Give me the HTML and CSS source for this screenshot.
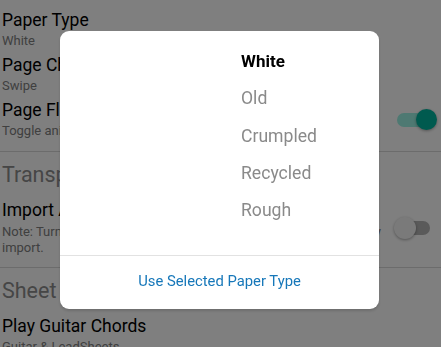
FILE: index.html
```html
<!doctype html>
<html lang="en">
  <head>
    <meta charset="UTF-8" />
    <meta name="viewport" content="width=device-width, initial-scale=1.0" />
    <title>Settings</title>
    <link rel="stylesheet" href="styles.css">
  </head>
  <body>
    <!-- Settings list behind the dialog -->
    <div class="settings">
      <div class="section">
        <div class="row">
          <div class="row-text">
            <div class="row-title">Paper Type</div>
            <div class="row-sub">White</div>
          </div>
        </div>
        <div class="row">
          <div class="row-text">
            <div class="row-title">Page Change Mode</div>
            <div class="row-sub">Swipe</div>
          </div>
        </div>
        <div class="row">
          <div class="row-text">
            <div class="row-title">Page Flip Animation</div>
            <div class="row-sub">Toggle animation when changing pages</div>
          </div>
          <label class="switch on"><span class="track"></span><span class="thumb"></span></label>
        </div>
      </div>

      <hr class="divider" />

      <div class="section">
        <div class="section-title">Transposition</div>
        <div class="row">
          <div class="row-text">
            <div class="row-title">Import Annotations</div>
            <div class="row-sub note">Note: Turning this on will noticeably slow down the speed of every import.</div>
          </div>
          <label class="switch"><span class="track"></span><span class="thumb"></span></label>
        </div>
      </div>

      <hr class="divider" />

      <div class="section">
        <div class="section-title">Sheet Music</div>
        <div class="row">
          <div class="row-text">
            <div class="row-title">Play Guitar Chords</div>
            <div class="row-sub">Guitar &amp; LeadSheets</div>
          </div>
        </div>
      </div>
    </div>

    <!-- Modal -->
    <div class="overlay">
      <div class="dialog">
        <ul class="picker">
          <li class="selected">White</li>
          <li>Old</li>
          <li>Crumpled</li>
          <li>Recycled</li>
          <li>Rough</li>
        </ul>
        <div class="dialog-actions">
          <button class="action">Use Selected Paper Type</button>
        </div>
      </div>
    </div>
  </body>
</html>
```

FILE: styles.css
```css
body {
  margin: 0;
  font-family: Roboto, 'Noto Sans', Arial, sans-serif;
  background: #ffffff;
  color: #000000;
  overflow: hidden;
}

/* Settings list */
.settings {
  padding: 10px 0 0 2px;
}

.row {
  display: flex;
  align-items: center;
  margin-bottom: 5px;
}

.row-text {
  flex: 1;
  min-width: 0;
}

.row-title {
  font-size: 17.5px;
  line-height: 20px;
}

.row-sub {
  font-size: 13px;
  line-height: 19px;
  margin-top: 1px;
  color: #808080;
}

.row-sub.note {
  line-height: 16px;
  margin-top: 4px;
  max-width: 382px;
}

.section-title {
  font-size: 21.5px;
  line-height: 26px;
  color: #8c8c8c;
  margin: 10px 0 12px;
}

.divider {
  border: 0;
  height: 1px;
  background: #d8d8d8;
  margin: 11px 0 0 -2px;
}

/* Switches */
.switch {
  position: relative;
  width: 40px;
  height: 22px;
  margin: 0 7px 0 -28px;
  flex-shrink: 0;
}

.track {
  position: absolute;
  left: 3px;
  top: 4px;
  width: 33px;
  height: 14px;
  border-radius: 7px;
  background: #b4b4b4;
}

.thumb {
  position: absolute;
  left: 0;
  top: 0;
  width: 22px;
  height: 22px;
  border-radius: 50%;
  background: #f5f5f5;
  box-shadow: 0 1px 3px rgba(0, 0, 0, 0.35);
}

.switch.on .track {
  background: #9cf2e4;
}

.switch.on .thumb {
  left: auto;
  right: -3px;
  width: 21px;
  height: 21px;
  background: #00b49e;
}

/* Modal */
.overlay {
  position: fixed;
  inset: 0;
  background: rgba(0, 0, 0, 0.5);
  display: flex;
  justify-content: center;
  align-items: flex-start;
  padding-top: 31px;
}

.dialog {
  width: 319px;
  margin-left: -2px;
  background: #ffffff;
  border-radius: 9px;
  box-shadow: 0 2px 3px rgba(0, 0, 0, 0.15);
  overflow: hidden;
}

.picker {
  list-style: none;
  margin: 0;
  padding: 12px 0 25px 181px;
  border-bottom: 1px solid #e2e2e2;
}

.picker li {
  font-size: 17.6px;
  line-height: 37.33px;
  color: #8a8a8a;
}

.picker li.selected {
  color: #000000;
  font-weight: 700;
  font-size: 17px;
}

.dialog-actions {
  display: flex;
  justify-content: center;
  padding: 15px 0 18px;
}

.action {
  border: none;
  background: none;
  padding: 0;
  font-family: inherit;
  font-size: 14.8px;
  line-height: 20px;
  color: #1677b9;
  cursor: pointer;
}
```
